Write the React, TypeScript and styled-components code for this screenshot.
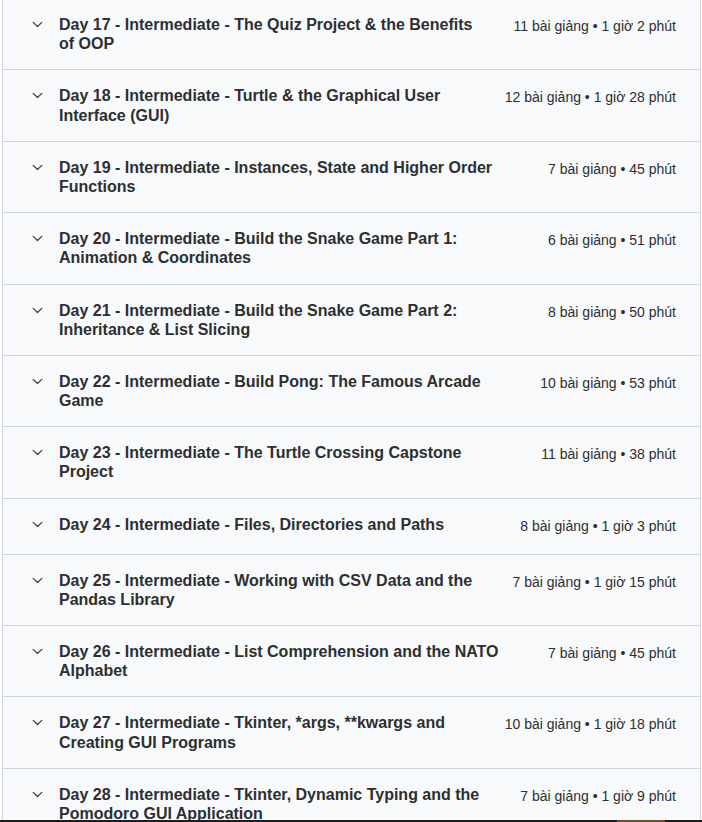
import React from "react";
import styled, { createGlobalStyle } from "styled-components";

const GlobalStyle = createGlobalStyle`
  html, body {
    margin: 0;
    padding: 0;
    background: #ffffff;
    overflow: hidden;
  }
  body {
    font-family: "Liberation Sans", Arial, sans-serif;
    color: #2d2f31;
  }
`;

const Curriculum = styled.div`
  margin: -2px 0 0 2px;
  width: 699px;
  box-sizing: border-box;
  border-left: 1px solid #d1d7dc;
  border-right: 1px solid #d1d7dc;
  border-bottom: 1px solid #d1d7dc;
`;

const Section = styled.div`
  display: flex;
  align-items: flex-start;
  gap: 32px;
  min-height: 56px;
  box-sizing: border-box;
  padding: 16px 24px;
  background: #f7f9fa;
  border-top: 1px solid #d1d7dc;
`;

const TitleArea = styled.div`
  flex: 1;
  display: flex;
  align-items: flex-start;
  min-width: 0;
`;

const ChevronBox = styled.span`
  flex: 0 0 32px;
  height: 19.2px;
  display: flex;
  align-items: center;
  padding-left: 5px;
  box-sizing: border-box;
  color: #3e4143;
`;

const Title = styled.h3`
  margin: 0;
  font-size: 16px;
  font-weight: 700;
  line-height: 1.2;
  color: #2d2f31;
`;

const Meta = styled.span`
  flex: 0 0 auto;
  margin-top: 2px;
  font-size: 14px;
  line-height: 1.4;
  white-space: nowrap;
  color: #2d2f31;
`;

const TaskStrip = styled.div`
  position: fixed;
  left: 0;
  right: 0;
  bottom: 0;
  height: 2px;
  background: #1c1c1c;
`;

const TaskAccent = styled.span`
  position: absolute;
  left: 617px;
  width: 48px;
  top: 0;
  bottom: 0;
  background: #7a4a26;
`;

const Chevron = () => (
  <svg width="11" height="7" viewBox="0 0 11 7" fill="none">
    <path
      d="M1.2 1.4 L5.5 5.5 L9.8 1.4"
      stroke="currentColor"
      strokeWidth="1.3"
      strokeLinecap="round"
      strokeLinejoin="round"
    />
  </svg>
);

const sections: { title: string; meta: string }[] = [
  { title: "Day 17 - Intermediate - The Quiz Project & the Benefits of OOP", meta: "11 bài giảng • 1 giờ 2 phút" },
  { title: "Day 18 - Intermediate - Turtle & the Graphical User Interface (GUI)", meta: "12 bài giảng • 1 giờ 28 phút" },
  { title: "Day 19 - Intermediate - Instances, State and Higher Order Functions", meta: "7 bài giảng • 45 phút" },
  { title: "Day 20 - Intermediate - Build the Snake Game Part 1: Animation & Coordinates", meta: "6 bài giảng • 51 phút" },
  { title: "Day 21 - Intermediate - Build the Snake Game Part 2: Inheritance & List Slicing", meta: "8 bài giảng • 50 phút" },
  { title: "Day 22 - Intermediate - Build Pong: The Famous Arcade Game", meta: "10 bài giảng • 53 phút" },
  { title: "Day 23 - Intermediate - The Turtle Crossing Capstone Project", meta: "11 bài giảng • 38 phút" },
  { title: "Day 24 - Intermediate - Files, Directories and Paths", meta: "8 bài giảng • 1 giờ 3 phút" },
  { title: "Day 25 - Intermediate - Working with CSV Data and the Pandas Library", meta: "7 bài giảng • 1 giờ 15 phút" },
  { title: "Day 26 - Intermediate - List Comprehension and the NATO Alphabet", meta: "7 bài giảng • 45 phút" },
  { title: "Day 27 - Intermediate - Tkinter, *args, **kwargs and Creating GUI Programs", meta: "10 bài giảng • 1 giờ 18 phút" },
  { title: "Day 28 - Intermediate - Tkinter, Dynamic Typing and the Pomodoro GUI Application", meta: "7 bài giảng • 1 giờ 9 phút" },
];

export default function App() {
  return (
    <>
      <GlobalStyle />
      <Curriculum>
        {sections.map((s) => (
          <Section key={s.title}>
            <TitleArea>
              <ChevronBox>
                <Chevron />
              </ChevronBox>
              <Title>{s.title}</Title>
            </TitleArea>
            <Meta>{s.meta}</Meta>
          </Section>
        ))}
      </Curriculum>
      <TaskStrip>
        <TaskAccent />
      </TaskStrip>
    </>
  );
}
